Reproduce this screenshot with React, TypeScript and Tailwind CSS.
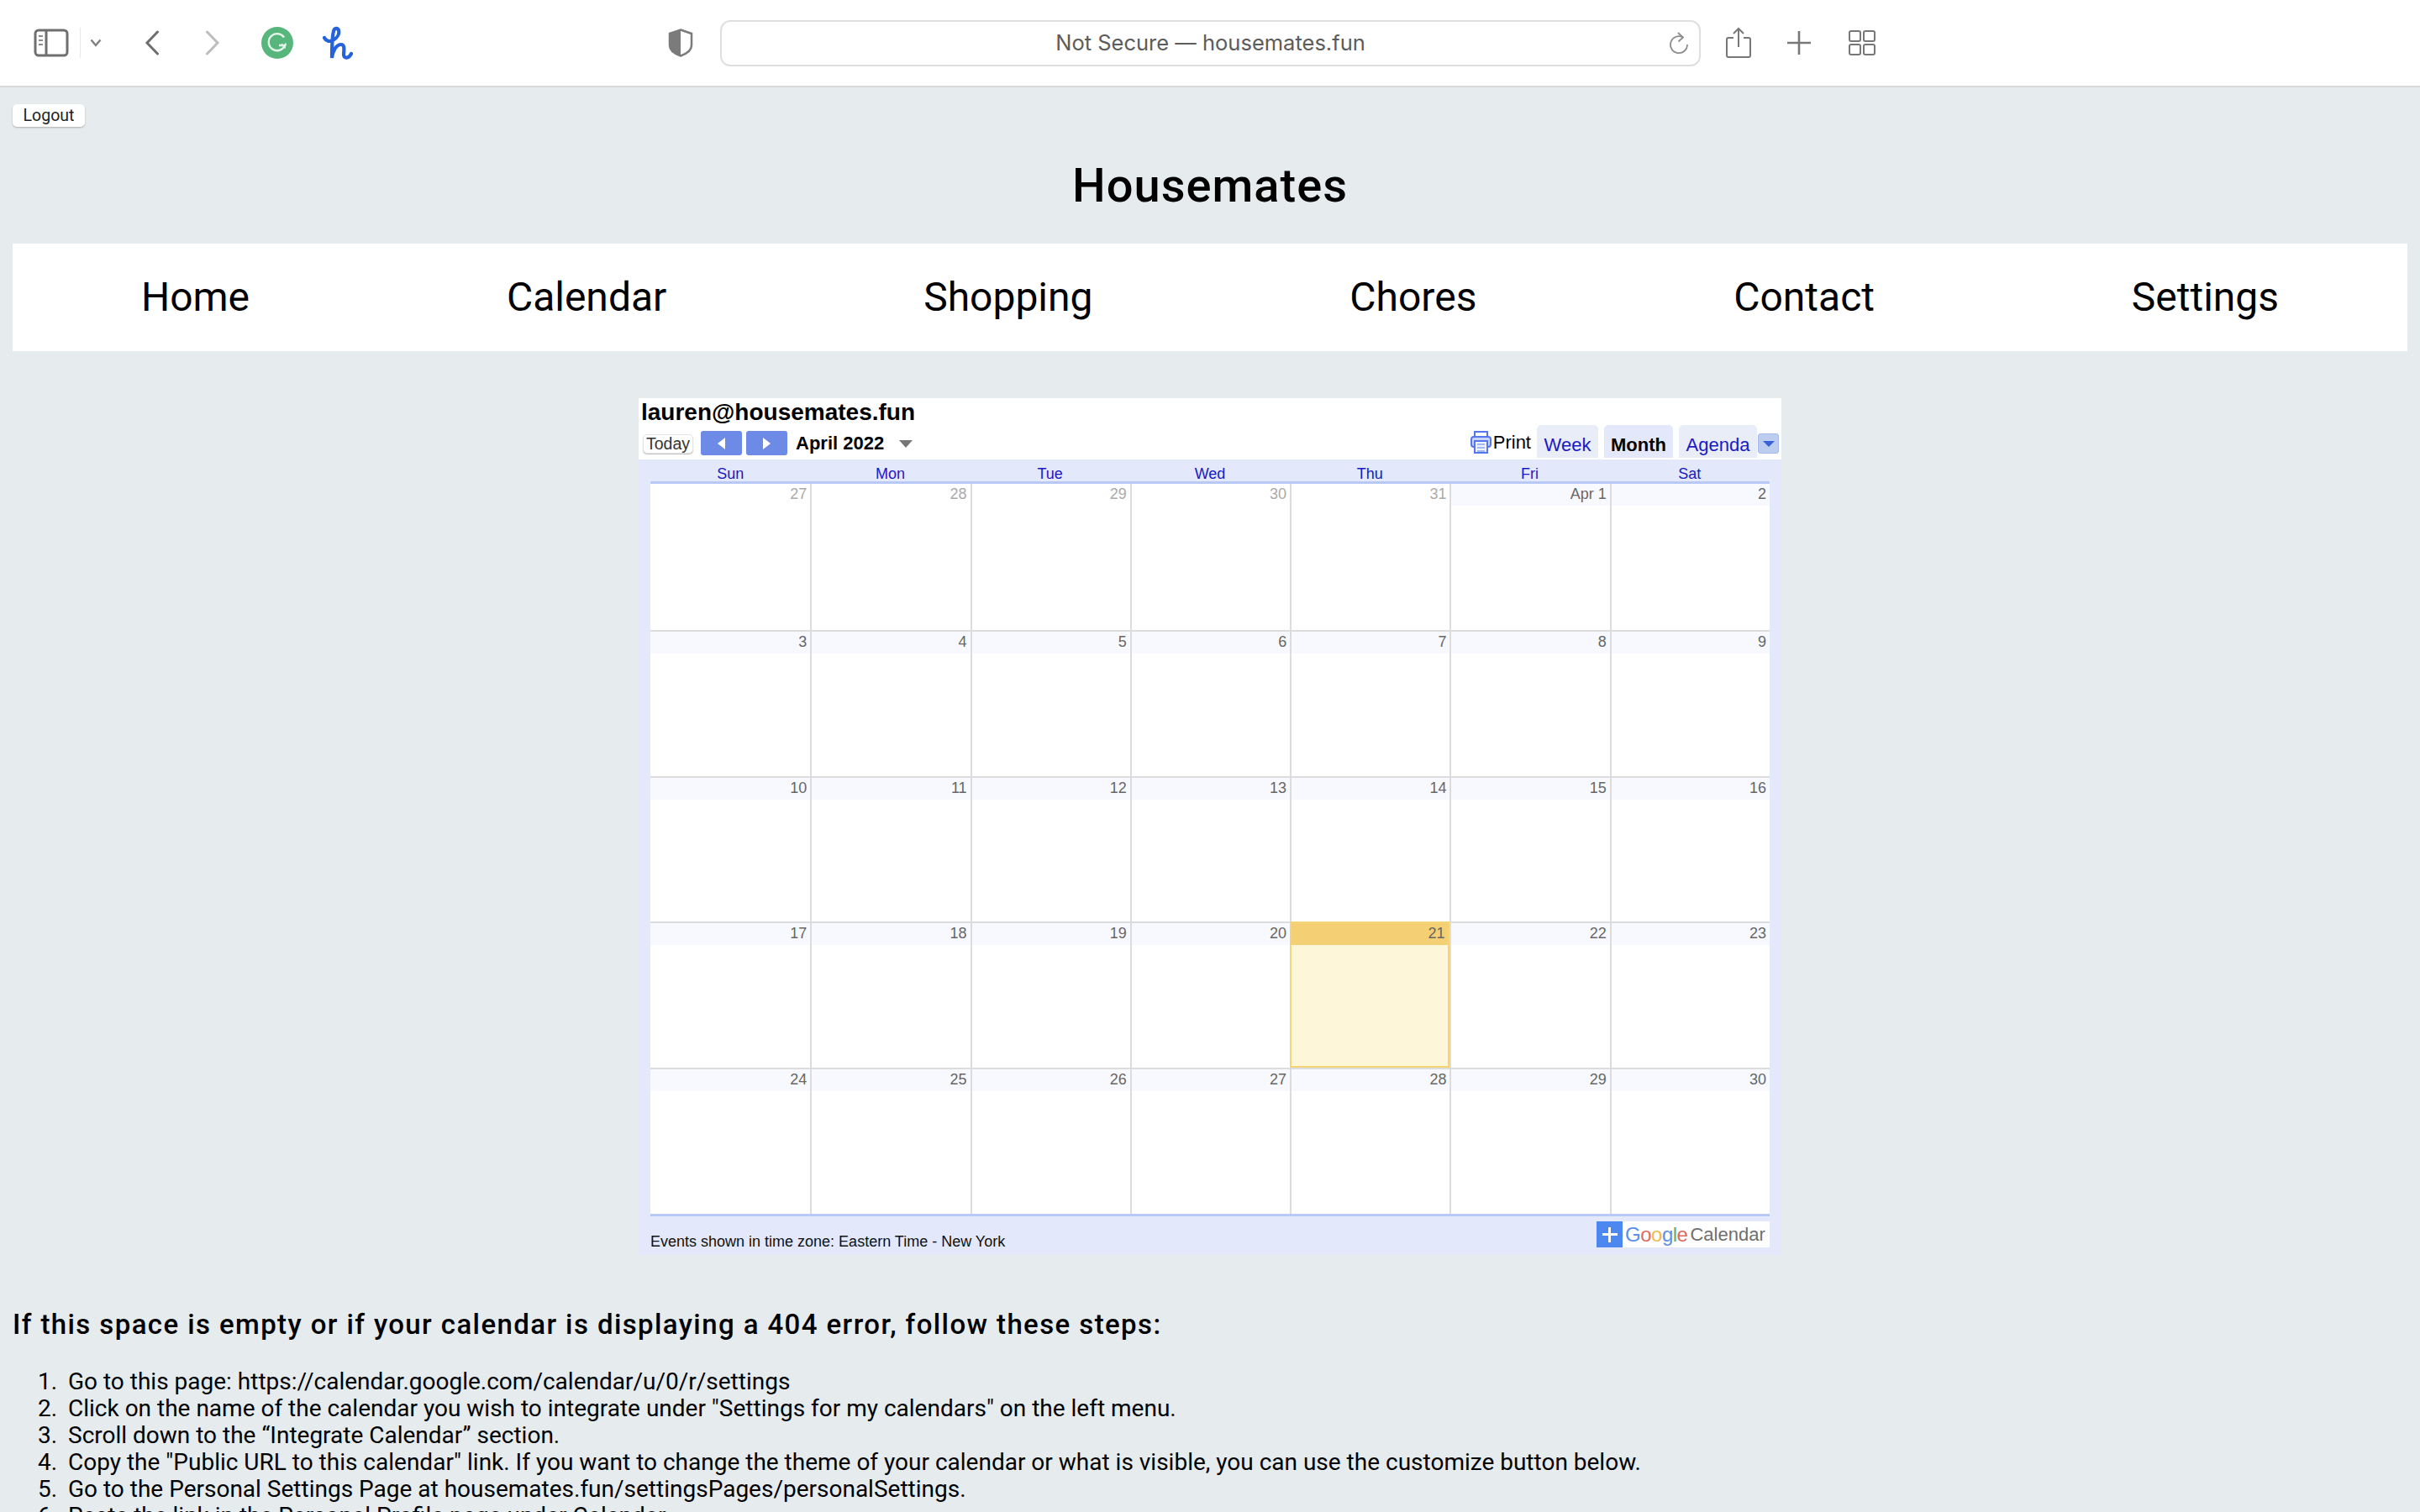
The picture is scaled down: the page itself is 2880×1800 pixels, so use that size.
import React from 'react';

const navLinks = ['Home', 'Calendar', 'Shopping', 'Chores', 'Contact', 'Settings'];
const weekDays = ['Sun', 'Mon', 'Tue', 'Wed', 'Thu', 'Fri', 'Sat'];

// muted = day outside of the current month
const days = [
  { label: '27', muted: true }, { label: '28', muted: true }, { label: '29', muted: true },
  { label: '30', muted: true }, { label: '31', muted: true }, { label: 'Apr 1' }, { label: '2' },
  ...Array.from({ length: 28 }, (_, i) => ({ label: String(i + 3) })),
];

const steps = [
  'Go to this page: https://calendar.google.com/calendar/u/0/r/settings',
  'Click on the name of the calendar you wish to integrate under "Settings for my calendars" on the left menu.',
  'Scroll down to the “Integrate Calendar” section.',
  'Copy the "Public URL to this calendar" link. If you want to change the theme of your calendar or what is visible, you can use the customize button below.',
  'Go to the Personal Settings Page at housemates.fun/settingsPages/personalSettings.',
  'Paste the link in the Personal Profile page under Calendar.',
];

const BrowserBar = () => (
  <div className="flex h-[104px] items-center border-b-2 border-[#d9d9d9] bg-white">
    <svg width="42" height="34" viewBox="0 0 42 34" fill="none" className="ml-[40px]">
      <rect x="2" y="2" width="38" height="30" rx="4" stroke="#6f6f6f" stroke-width="3" />
      <path d="M15 2v30" stroke="#6f6f6f" stroke-width="3" />
      <path d="M6 9h5M6 14h5M6 19h5" stroke="#8a8a8a" stroke-width="2" />
    </svg>
    <div className="ml-[13px] h-[36px] w-px bg-[#e8e8e8]" />
    <svg width="14" height="10" viewBox="0 0 14 10" fill="none" className="ml-[11px]">
      <path d="M1.5 1.5 7 8l5.5-6.5" stroke="#808080" stroke-width="2.4" />
    </svg>
    <svg width="18" height="30" viewBox="0 0 18 30" fill="none" className="ml-[51px]">
      <path d="M15.5 2 3 15l12.500 13" stroke="#6e6e6e" stroke-width="3" stroke-linecap="round" />
    </svg>
    <svg width="18" height="30" viewBox="0 0 18 30" fill="none" className="ml-[54px]">
      <path d="M2.500 2 15 15 2.500 28" stroke="#bdbdbd" stroke-width="3" stroke-linecap="round" />
    </svg>
    <svg width="38" height="38" viewBox="0 0 38 38" fill="none" className="ml-[49px]">
      <circle cx="19" cy="19" r="19" fill="#57b67c" />
      <path d="M27 12.500A10 10 0 1 0 28 22h-7" stroke="#e4f4ea" stroke-width="2.400" />
      <path d="M24 20.500 28 24.500l1-5" stroke="#e4f4ea" stroke-width="1.800" />
    </svg>
    <svg width="36" height="40" viewBox="0 0 36 40" fill="none" className="ml-[35px]">
      <path
        d="M2 14c2 4 6 5 10 3 6-3 8-8 7-12-1-3-5-3-6 1-1.500 6-2 20-2 32 1-8 5-16 11-16 5 0 3 8 3 12 0 5 6 5 9-1"
        stroke="#2563dc"
        stroke-width="4.200"
        stroke-linecap="round"
      />
    </svg>
    <svg width="30" height="34" viewBox="0 0 30 34" fill="none" className="ml-[375px]">
      <path d="M15 1.500 28 6v14c0 6-6 10-13 12.500C8 30 2 26 2 20V6z" fill="#fff" stroke="#7b7b7b" stroke-width="2.500" />
      <path d="M15 1.500 2 6v14c0 6 6 10 13 12.500z" fill="#7b7b7b" />
    </svg>
    <div className="relative ml-[32px] flex h-[55px] w-[1167px] items-center justify-center rounded-[12px] border-2 border-[#dfdfdf] bg-white">
      <span className="font-['Inter'] text-[25.5px] leading-none text-[#5c5c5c]">Not Secure — housemates.fun</span>
      <svg width="24" height="28" viewBox="0 0 24 28" fill="none" className="absolute right-[12px] top-[12px]">
        <path d="M17 6.500A10 10 0 1 0 22 15" stroke="#8b8b8b" stroke-width="1.800" />
        <path d="M11 1l6 5.500-5.500 5" stroke="#8b8b8b" stroke-width="1.800" />
      </svg>
    </div>
    <svg width="30" height="38" viewBox="0 0 30 38" fill="none" className="ml-[30px]">
      <path d="M9 13H3a2 2 0 0 0-2 2v19a2 2 0 0 0 2 2h24a2 2 0 0 0 2-2V15a2 2 0 0 0-2-2h-6" stroke="#777" stroke-width="2" />
      <path d="M15 24V2M9 8l6-6 6 6" stroke="#777" stroke-width="2" />
    </svg>
    <svg width="28" height="28" viewBox="0 0 28 28" fill="none" className="ml-[43px]">
      <path d="M14 0v28M0 14h28" stroke="#777" stroke-width="2.600" />
    </svg>
    <svg width="32" height="30" viewBox="0 0 32 30" fill="none" className="ml-[45px]">
      <rect x="1" y="1" width="13" height="12" rx="2" stroke="#777" stroke-width="2" />
      <rect x="18" y="1" width="13" height="12" rx="2" stroke="#777" stroke-width="2" />
      <rect x="1" y="17" width="13" height="12" rx="2" stroke="#777" stroke-width="2" />
      <rect x="18" y="17" width="13" height="12" rx="2" stroke="#777" stroke-width="2" />
    </svg>
  </div>
);

const CalendarToolbar = () => (
  <div className="h-[73px] bg-white font-['Liberation_Sans'] text-black">
    <div className="h-[37px] pl-[3px] text-[28px] font-bold leading-[33px]">lauren@housemates.fun</div>
    <div className="flex h-[36px] items-start">
      <button className="ml-[5px] mt-[6px] flex h-[23px] w-[60px] items-center justify-center rounded-[5px] border border-[#e3e3e3] bg-white text-[19.5px] leading-none text-[#333] shadow-[0_1px_1px_rgba(0,0,0,0.25)]">
        Today
      </button>
      <div className="ml-[9px] mt-[2px] flex h-[29px] w-[49px] items-center justify-center rounded-[3px] bg-[#6d8ae6]">
        <div className="h-0 w-0 border-y-[7px] border-r-[9px] border-y-transparent border-r-white" />
      </div>
      <div className="ml-[5px] mt-[2px] flex h-[29px] w-[49px] items-center justify-center rounded-[3px] bg-[#6d8ae6]">
        <div className="h-0 w-0 border-y-[7px] border-l-[9px] border-y-transparent border-l-white" />
      </div>
      <div className="ml-[10px] mt-[2px] text-[22px] font-bold leading-[29px]">April 2022</div>
      <div className="ml-[18px] mt-[13px] h-0 w-0 border-x-[8.5px] border-t-[9px] border-x-transparent border-t-[#777]" />
      <div className="ml-auto flex items-start">
        <svg width="25" height="28" viewBox="0 0 25 28" fill="none" className="mt-[1px]">
          <path d="M5 8V2h15v6" stroke="#5577ee" stroke-width="2" />
          <rect x="1" y="8" width="23" height="12" rx="3" fill="#c8d4fa" stroke="#5577ee" stroke-width="2" />
          <rect x="5" y="13" width="15" height="14" fill="#eef2ff" stroke="#5577ee" stroke-width="2" />
          <path d="M8 17h9M8 21h9M8 25h9" stroke="#8ca4f0" stroke-width="1.500" />
        </svg>
        <span className="ml-[2px] mt-[1px] text-[22px] leading-[29px]">Print</span>
        <div className="ml-[7px] flex h-[39px] w-[73px] -translate-y-[5px] items-end justify-center rounded-t-[5px] bg-[#e8edf7] pb-[2px] text-[22px] leading-[26px] text-[#1a1ac4]">
          Week
        </div>
        <div className="ml-[7px] flex h-[39px] w-[82px] -translate-y-[5px] items-end justify-center rounded-t-[5px] bg-[#e3e9fb] pb-[2px] text-[22px] font-bold leading-[26px]">
          Month
        </div>
        <div className="ml-[7px] flex h-[39px] w-[93px] -translate-y-[5px] items-end justify-center rounded-t-[5px] bg-[#e8edf7] pb-[2px] text-[22px] leading-[26px] text-[#1a1ac4]">
          Agenda
        </div>
        <div className="ml-px mr-[3px] mt-[5px] flex h-[24px] w-[25px] items-center justify-center rounded-[3px] border border-[#a5b8e8] bg-[#bccdf0]">
          <div className="h-0 w-0 border-x-[7px] border-t-[7px] border-x-transparent border-t-[#3a5fd8]" />
        </div>
      </div>
    </div>
  </div>
);

const CalendarGrid = () => (
  <div className="bg-[#e3e8fb] px-[14px] font-['Liberation_Sans']">
    <div className="grid h-[29px] grid-cols-7 border-b-[3px] border-[#b9c9f7]">
      {weekDays.map((day) => (
        <div key={day} className="pt-[8px] text-center text-[18px] leading-[19px] text-[#1a1ac4]">
          {day}
        </div>
      ))}
    </div>
    <div className="grid h-[869px] grid-cols-7 grid-rows-5 bg-white">
      {days.map((day, i) => {
        const isToday = day.label === '21';
        const firstRow = i < 7;
        const firstCol = i % 7 === 0;
        return (
          <div
            key={i}
            className={`flex flex-col ${firstRow ? '' : 'border-t-2 border-[#dcdcdc]'} ${firstCol ? '' : 'border-l-2 border-l-[#dcdcdc]'} ${isToday ? 'border-2! border-[#f5d476]! bg-[#fdf6d9]' : ''}`}
          >
            <div
              className={`h-[26px] pr-[4px] text-right text-[18px] leading-[24px] ${day.muted ? 'text-[#aaaaaa]' : 'text-[#666666]'} ${isToday ? 'bg-[#f4cf74]' : day.muted ? 'bg-white' : 'bg-[#f8f9ff]'}`}
            >
              {day.label}
            </div>
          </div>
        );
      })}
    </div>
    <div className="flex h-[49px] items-start border-t-[3px] border-[#b9c9f7] pt-[6px]">
      <span className="mt-[14px] text-[18px] leading-[21px] text-[#111]">Events shown in time zone: Eastern Time - New York</span>
      <div className="ml-auto flex h-[31px] w-[206px] items-center bg-white">
        <div className="relative h-[31px] w-[31px] bg-[#4c88f0]">
          <div className="absolute left-[7px] top-[14px] h-[3px] w-[18px] bg-white" />
          <div className="absolute left-[14px] top-[7px] h-[18px] w-[3px] bg-white" />
        </div>
        <span className="ml-[3px] text-[24px] leading-none tracking-[-0.5px]">
          <span className="text-[#5a8ee8]">G</span>
          <span className="text-[#dd6a5c]">o</span>
          <span className="text-[#eebb4d]">o</span>
          <span className="text-[#5a8ee8]">g</span>
          <span className="text-[#64ac6c]">l</span>
          <span className="text-[#dd6a5c]">e</span>
        </span>
        <span className="ml-[3px] text-[22px] leading-none text-[#6f6f6f]">Calendar</span>
      </div>
    </div>
  </div>
);

export default function App() {
  return (
    <div className="h-screen overflow-hidden bg-[#e6ebee] font-['Roboto',sans-serif] text-black">
      <BrowserBar />

      <div className="px-[15px]">
        <button className="mt-[20px] flex h-[27px] w-[86px] items-center justify-center rounded-[5px] bg-white text-[19.5px] leading-none text-[#222] shadow-[0_1px_2px_rgba(0,0,0,0.25)]">
          Logout
        </button>

        <h1 className="mt-[37px] text-center text-[56px] font-medium leading-[66px] tracking-[1px]">Housemates</h1>

        <nav className="mt-[36px] flex h-[128px] items-center justify-around bg-white">
          {navLinks.map((link) => (
            <a key={link} className="text-[48px] leading-none text-black">
              {link}
            </a>
          ))}
        </nav>

        <div className="mx-auto mt-[56px] w-[1360px]">
          <CalendarToolbar />
          <CalendarGrid />
        </div>

        <h2 className="mt-[64px] text-[33px] font-medium leading-[38px] tracking-[1.4px]">
          If this space is empty or if your calendar is displaying a 404 error, follow these steps:
        </h2>

        <ol className="mt-[33px] pl-[30px] text-[28px] leading-[32px]">
          {steps.map((step, i) => (
            <li key={step} className="flex">
              <span className="w-[36px] shrink-0">{i + 1}.</span>
              <span>{step}</span>
            </li>
          ))}
        </ol>
      </div>
    </div>
  );
}
